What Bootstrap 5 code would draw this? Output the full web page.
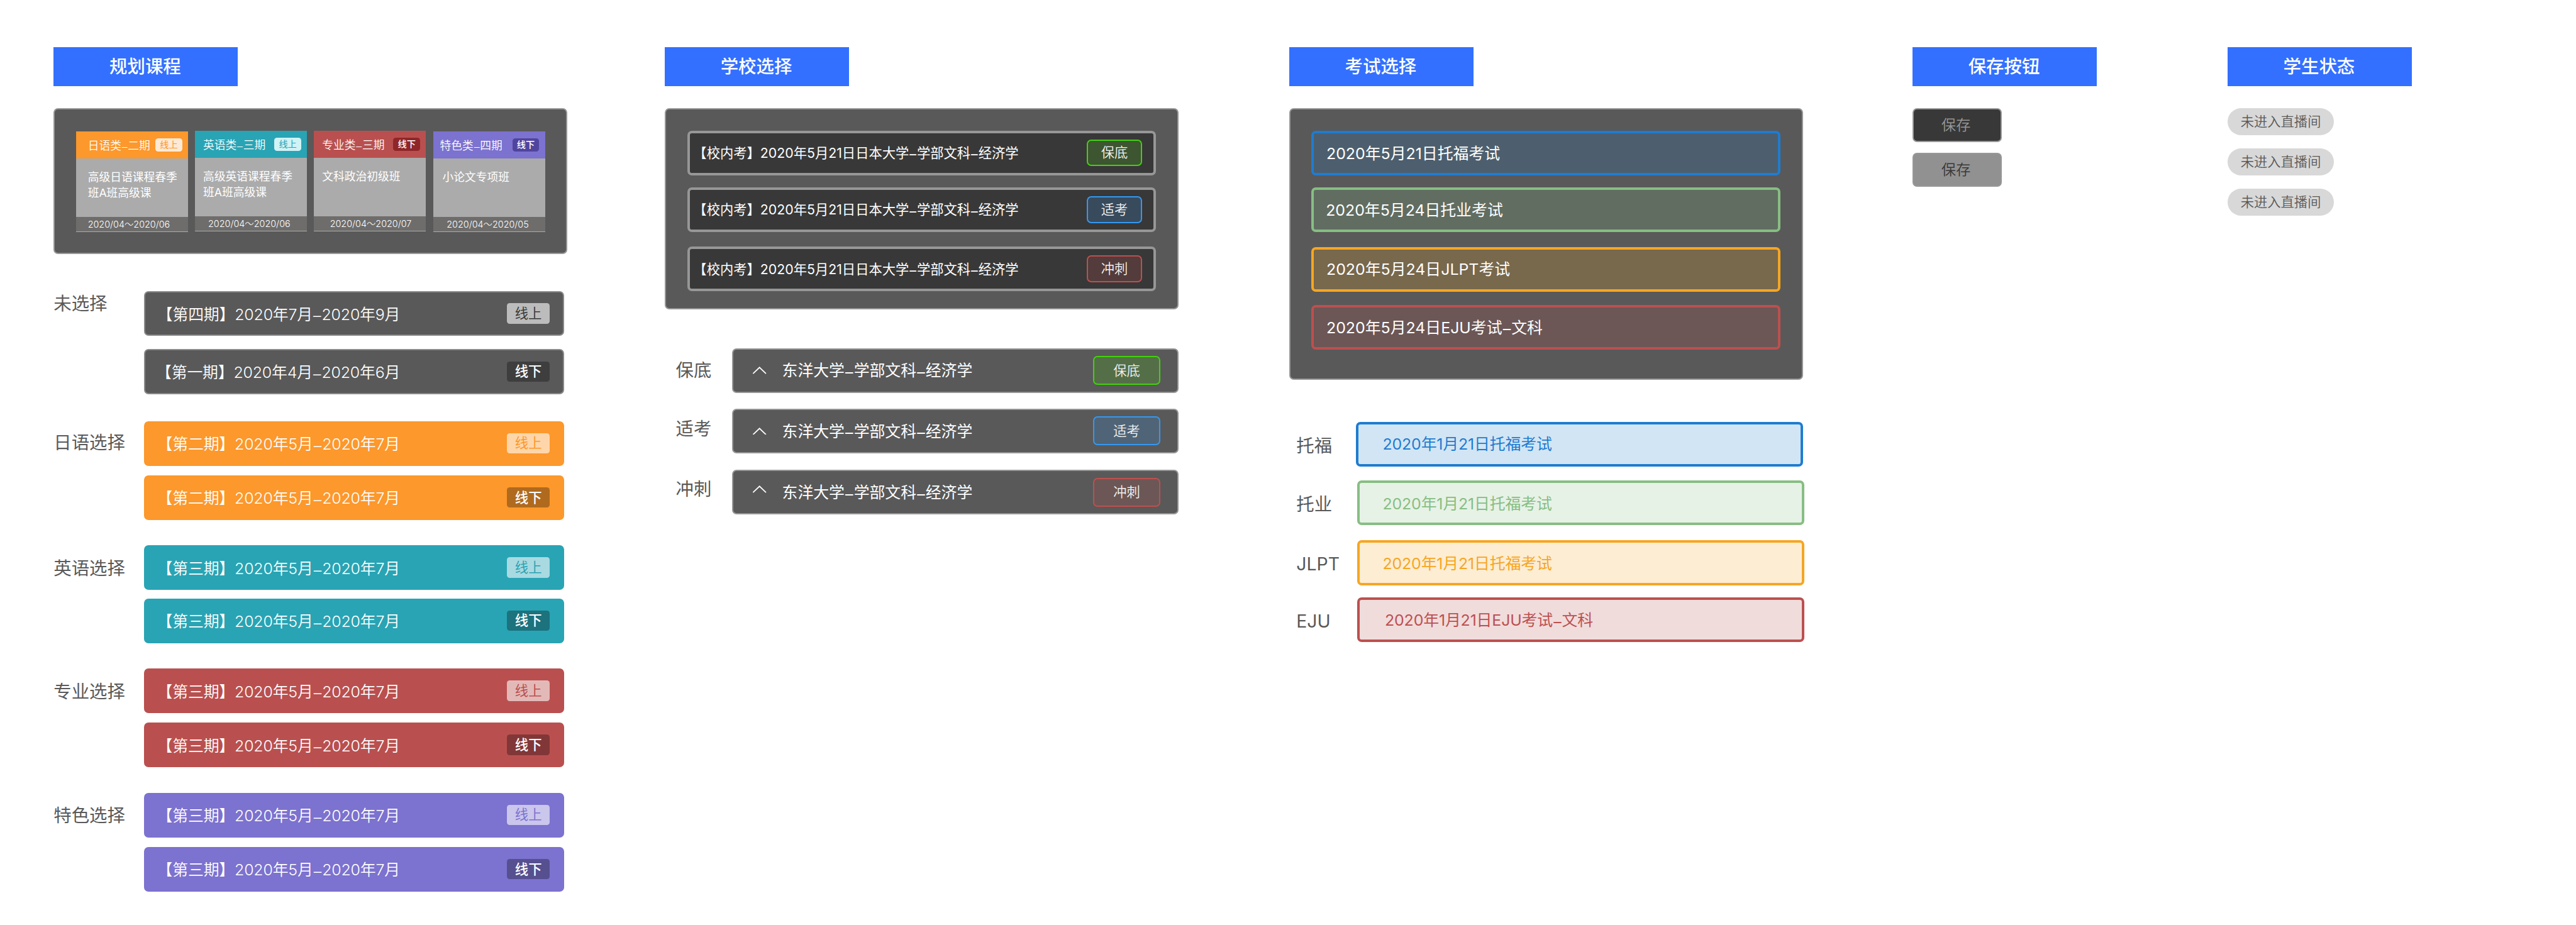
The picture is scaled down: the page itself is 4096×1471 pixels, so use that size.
<!DOCTYPE html>
<html lang="zh-CN">
<head>
<meta charset="utf-8">
<meta name="viewport" content="width=device-width, initial-scale=1">
<title>组件状态</title>
<link rel="stylesheet" href="https://cdn.jsdelivr.net/npm/bootstrap@5.3.0/dist/css/bootstrap.min.css">
<style>
  html { font-size: 8.8812px; }
  body { font-family: Inter, "Noto Sans CJK SC", sans-serif; font-size: 2.8rem; line-height: 1; color: #595959; background: #fff; overflow: hidden; }
  .board { width: 461.2rem; height: 165.6rem; padding: 8.4rem 0 0 9.6rem; }
  .sheet-a, .sheet-b, .sheet-c { width: 92rem; }
  .sheet-b { margin-left: 17.4rem; }
  .sheet-c { margin-left: 19.8rem; }
  .sheet-d { width: 33rem; margin-left: 19.6rem; }
  .sheet-e { width: 33rem; margin-left: 23.4rem; }
  .sheet-title { width: 33rem; height: 7rem; font-size: 3.2rem; font-weight: 500; background: #3370ff; color: #fff; margin-bottom: 4rem; padding: .2rem .2rem 0 0; }
  .panel { background: #595959; border: 2px solid #979797; border-radius: .8rem; }
  .caption { font-size: 3.2rem; line-height: 4.4rem; flex: none; white-space: nowrap; }
  .txt { white-space: nowrap; }
  .dash { margin: 0 .045em; vertical-align: -.11em; line-height: 0; }

  /* course cards */
  .courses { height: 26.1rem; padding: 3.8rem 3.8rem 0 3.8rem; }
  .course { width: 20.05rem; height: 18rem; background: #ababab; color: #fff; font-size: 2rem; }
  .course-head { height: 4.8rem; font-weight: 350; }
  .course-head > .txt { padding-top: .3rem; }
  .course-body { height: 10.5rem; padding-top: 2.1rem; line-height: 2.8rem; }
  .course-date { height: 2.65rem; background: #6e6d6c; font-size: 1.62rem; font-weight: 300; padding-top: .1rem; }
  .mini-tag { width: 4.8rem; height: 2.4rem; border-radius: .5rem; font-size: 1.6rem; font-weight: 400; }
  .low { margin-top: .1rem; }
  .in-21 { padding-left: 2.1rem; } .in-14 { padding-left: 1.45rem; } .in-12 { padding-left: 1.25rem; } .in-17 { padding-left: 1.7rem; }
  .in-23 { padding-left: 2.35rem; } .in-28 { padding-left: 2.85rem; } .in-24 { padding-left: 2.45rem; }
  .end-10 { margin-right: 1.05rem; }

  /* term rows */
  .term-group { margin-top: 4.55rem; }
  .term-group .caption { width: 16.2rem; margin-top: 1.9rem; }
  .term-group.g-none { margin-top: 6.65rem; } .g-none .caption { margin-top: 0; }
  .term-group.g-jp { margin-top: 4.85rem; } .g-jp .caption { margin-top: 1.6rem; }
  .term { width: 75.2rem; height: 8rem; border-radius: .8rem; color: #fff; padding: 0 2.6rem 0 2.3rem; }
  .term + .term { margin-top: 1.7rem; }
  .g-none .term + .term { margin-top: 2.4rem; padding-left: 1.9rem; }
  .g-en .term + .term { margin-top: 1.5rem; }
  .term .txt { padding-top: .35rem; font-weight: 350; letter-spacing: -.018rem; }
  .tag { width: 7.6rem; height: 3.65rem; border-radius: .5rem; font-size: 2.4rem; }
  .tag-on { background: rgba(255,255,255,.6); }
  .tag-off { background: rgba(0,0,0,.3); color: #fff; font-weight: 500; }
  .c-gray { background: #595959; border: 2px solid #8a8a8a; padding: 0 2.4rem 0 2.1rem; } .c-gray .tag-on { color: #3a3a3a; }
  .c-orange { background: #fc982c; } .c-orange .tag-on { color: #fc982c; }
  .c-teal { background: #29a4b4; } .c-teal .tag-on { color: #29a4b4; }
  .c-red { background: #b9504f; } .c-red .tag-on { color: #b9504f; }
  .c-purple { background: #7c72cf; } .c-purple .tag-on { color: #7c72cf; }
  .m-orange { background: #fde9d5; color: #fc982c; } .m-teal { background: #d0f3f6; color: #29a4b4; }
  .m-red { background: #8f2628; color: #fff; font-weight: 500; } .m-purple { background: #50459e; color: #fff; font-weight: 500; }

  /* school rows */
  .schools { height: 36.05rem; padding: 3.75rem 3.8rem 0; }
  .school { height: 8rem; border: 4px solid #979797; border-radius: .8rem; background: #383838; color: #fff; font-size: 2.4rem; padding: 0 2rem 0 .65rem; }
  .school .txt { padding-top: .15rem; }
  .school + .school, .exam + .exam { margin-top: 2.15rem; }
  .school + .school + .school, .exam + .exam + .exam { margin-top: 2.65rem; }
  .level { width: 10rem; height: 4.8rem; border-radius: .8rem; border: 2px solid; font-size: 2.4rem; font-weight: 350; }
  .level span { color: #f2f2f2; }
  .l-green { border-color: #43d10e; background: #3d5530; }
  .l-blue { border-color: #3498f0; background: #384b5d; }
  .l-red { border-color: #bc504f; background: #533c3b; }
  .pick { margin-top: 2.83rem; }
  .pick-first { margin-top: 6.9rem; }
  .pick-last { margin-top: 2.95rem; }
  .pick .caption { width: 10.1rem; margin-left: 2rem; padding-bottom: .2rem; }
  .pick + .pick .caption { padding-bottom: .9rem; }
  .pick + .pick-last .caption { padding-bottom: 1.2rem; }
  .pick-row { width: 79.9rem; height: 8rem; border: 2px solid #979797; border-radius: .8rem; background: #595959; color: #fff; padding: 0 3.05rem 0 3.5rem; }
  .pick-row .txt { padding-top: .15rem; }
  .pick-row .level { width: 12rem; height: 5.2rem; }
  .pick-row .l-green { background: #546f48; } .pick-row .l-blue { background: #506477; } .pick-row .l-red { background: #6c5756; }
  .chev { width: 2.4rem; height: 1.3rem; margin-right: 2.8rem; flex: none; }
  .pick-last .chev { margin-bottom: 1.1rem; }

  /* exam rows */
  .exams { height: 48.6rem; padding: 3.8rem 3.8rem 0; }
  .exam { height: 8rem; border: 4px solid; border-radius: .8rem; padding-left: 2.2rem; }
  .exam .txt { color: #fff; padding-top: .1rem; }
  .exam + .exam + .exam + .exam { margin-top: 2.4rem; }
  .e-blue { border-color: #1f7cd0; background: #4d5f6e; } .e-green { border-color: #87be83; background: #626d61; padding-left: 2.1rem; }
  .e-orange { border-color: #f6a623; background: #78684c; } .e-red { border-color: #bc504f; background: #6c5756; }
  .plan { margin-top: 2.48rem; }
  .plan-first { margin-top: 7.6rem; }
  .plan-third { margin-top: 2.7rem; }
  .plan-last { margin-top: 2.2rem; }
  .plan .caption { width: 10.9rem; margin-left: 1.3rem; padding-top: .4rem; }
  .plan-first .caption { width: 10.7rem; }
  .plan-row { width: 80rem; height: 8rem; flex: none; border: 4px solid; border-radius: .8rem; padding-left: 4.1rem; }
  .plan-row .txt { padding-top: .3rem; letter-spacing: -.015rem; }
  .plan-first .plan-row { padding-left: 4.3rem; }
  .plan-first .txt { padding-top: 0; }
  .plan-last .plan-row { padding-left: 4.5rem; }
  .p-blue { border-color: #1f7cd0; background: #d2e5f4; color: #1f7cd0; }
  .p-green { border-color: #87be83; background: #e7f2e6; color: #87be83; }
  .p-orange { border-color: #f6a623; background: #fdedd3; color: #f6a623; }
  .p-red { border-color: #bc504f; background: #f1dcdc; color: #bc504f; }

  .save { width: 16rem; height: 6rem; border: 2px solid #979797; border-radius: .8rem; font-size: 2.6rem; padding: .2rem .4rem 0 0; }
  .save-dark { background: #383838; color: #979797; font-weight: 350; }
  .save-light { background: #919191; color: #383838; margin-top: 2rem; font-weight: 350; }
  .status { width: 19.1rem; height: 4.8rem; background: #d8d8d8; font-size: 2.4rem; font-weight: 350; color: #595959; margin-bottom: 2.4rem; }
</style>
</head>
<body>
<main class="board d-flex align-items-start">
  <section class="sheet-a">
    <div class="sheet-title d-flex align-items-center justify-content-center">规划课程</div>
    <div class="panel courses d-flex justify-content-between">
      <article class="course low">
        <div class="course-head c-orange d-flex align-items-center justify-content-between in-21"><span class="txt">日语类<span class="dash">–</span>二期</span><span class="mini-tag m-orange end-10 d-flex align-items-center justify-content-center">线上</span></div>
        <div class="course-body in-21">高级日语课程春季<br>班A班高级课</div>
        <div class="course-date d-flex align-items-center in-21"><span class="txt">2020/04～2020/06</span></div>
      </article>
      <article class="course">
        <div class="course-head c-teal d-flex align-items-center justify-content-between in-14"><span class="txt">英语类<span class="dash">–</span>三期</span><span class="mini-tag m-teal end-10 d-flex align-items-center justify-content-center">线上</span></div>
        <div class="course-body in-14">高级英语课程春季<br>班A班高级课</div>
        <div class="course-date d-flex align-items-center in-23"><span class="txt">2020/04～2020/06</span></div>
      </article>
      <article class="course">
        <div class="course-head c-red d-flex align-items-center justify-content-between in-14"><span class="txt">专业类<span class="dash">–</span>三期</span><span class="mini-tag m-red end-10 d-flex align-items-center justify-content-center">线下</span></div>
        <div class="course-body in-14">文科政治初级班</div>
        <div class="course-date d-flex align-items-center in-28"><span class="txt">2020/04～2020/07</span></div>
      </article>
      <article class="course low">
        <div class="course-head c-purple d-flex align-items-center justify-content-between in-12"><span class="txt">特色类<span class="dash">–</span>四期</span><span class="mini-tag m-purple end-10 d-flex align-items-center justify-content-center">线下</span></div>
        <div class="course-body in-17">小论文专项班</div>
        <div class="course-date d-flex align-items-center in-24"><span class="txt">2020/04～2020/05</span></div>
      </article>
    </div>

    <div class="term-group g-none d-flex align-items-start">
      <div class="caption">未选择</div>
      <div>
        <div class="term c-gray d-flex align-items-center justify-content-between"><span class="txt">【第四期】2020年7月<span class="dash">–</span>2020年9月</span><span class="tag tag-on d-flex align-items-center justify-content-center">线上</span></div>
        <div class="term c-gray d-flex align-items-center justify-content-between"><span class="txt">【第一期】2020年4月<span class="dash">–</span>2020年6月</span><span class="tag tag-off d-flex align-items-center justify-content-center">线下</span></div>
      </div>
    </div>
    <div class="term-group g-jp d-flex align-items-start">
      <div class="caption">日语选择</div>
      <div>
        <div class="term c-orange d-flex align-items-center justify-content-between"><span class="txt">【第二期】2020年5月<span class="dash">–</span>2020年7月</span><span class="tag tag-on d-flex align-items-center justify-content-center">线上</span></div>
        <div class="term c-orange d-flex align-items-center justify-content-between"><span class="txt">【第二期】2020年5月<span class="dash">–</span>2020年7月</span><span class="tag tag-off d-flex align-items-center justify-content-center">线下</span></div>
      </div>
    </div>
    <div class="term-group g-en d-flex align-items-start">
      <div class="caption">英语选择</div>
      <div>
        <div class="term c-teal d-flex align-items-center justify-content-between"><span class="txt">【第三期】2020年5月<span class="dash">–</span>2020年7月</span><span class="tag tag-on d-flex align-items-center justify-content-center">线上</span></div>
        <div class="term c-teal d-flex align-items-center justify-content-between"><span class="txt">【第三期】2020年5月<span class="dash">–</span>2020年7月</span><span class="tag tag-off d-flex align-items-center justify-content-center">线下</span></div>
      </div>
    </div>
    <div class="term-group d-flex align-items-start">
      <div class="caption">专业选择</div>
      <div>
        <div class="term c-red d-flex align-items-center justify-content-between"><span class="txt">【第三期】2020年5月<span class="dash">–</span>2020年7月</span><span class="tag tag-on d-flex align-items-center justify-content-center">线上</span></div>
        <div class="term c-red d-flex align-items-center justify-content-between"><span class="txt">【第三期】2020年5月<span class="dash">–</span>2020年7月</span><span class="tag tag-off d-flex align-items-center justify-content-center">线下</span></div>
      </div>
    </div>
    <div class="term-group d-flex align-items-start">
      <div class="caption">特色选择</div>
      <div>
        <div class="term c-purple d-flex align-items-center justify-content-between"><span class="txt">【第三期】2020年5月<span class="dash">–</span>2020年7月</span><span class="tag tag-on d-flex align-items-center justify-content-center">线上</span></div>
        <div class="term c-purple d-flex align-items-center justify-content-between"><span class="txt">【第三期】2020年5月<span class="dash">–</span>2020年7月</span><span class="tag tag-off d-flex align-items-center justify-content-center">线下</span></div>
      </div>
    </div>
  </section>

  <section class="sheet-b">
    <div class="sheet-title d-flex align-items-center justify-content-center">学校选择</div>
    <div class="panel schools">
      <div class="school d-flex align-items-center justify-content-between"><span class="txt">【校内考】2020年5月21日日本大学<span class="dash">–</span>学部文科<span class="dash">–</span>经济学</span><span class="level l-green d-flex align-items-center justify-content-center"><span>保底</span></span></div>
      <div class="school d-flex align-items-center justify-content-between"><span class="txt">【校内考】2020年5月21日日本大学<span class="dash">–</span>学部文科<span class="dash">–</span>经济学</span><span class="level l-blue d-flex align-items-center justify-content-center"><span>适考</span></span></div>
      <div class="school d-flex align-items-center justify-content-between"><span class="txt">【校内考】2020年5月21日日本大学<span class="dash">–</span>学部文科<span class="dash">–</span>经济学</span><span class="level l-red d-flex align-items-center justify-content-center"><span>冲刺</span></span></div>
    </div>
    <div class="pick pick-first d-flex align-items-center">
      <div class="caption">保底</div>
      <div class="pick-row d-flex align-items-center"><svg class="chev" viewBox="0 0 24 13" fill="none" stroke="#fff" stroke-width="2" stroke-linecap="round"><path d="M1 12 12 1.4 23 12"/></svg><span class="txt me-auto">东洋大学<span class="dash">–</span>学部文科<span class="dash">–</span>经济学</span><span class="level l-green d-flex align-items-center justify-content-center"><span>保底</span></span></div>
    </div>
    <div class="pick d-flex align-items-center">
      <div class="caption">适考</div>
      <div class="pick-row d-flex align-items-center"><svg class="chev" viewBox="0 0 24 13" fill="none" stroke="#fff" stroke-width="2" stroke-linecap="round"><path d="M1 12 12 1.4 23 12"/></svg><span class="txt me-auto">东洋大学<span class="dash">–</span>学部文科<span class="dash">–</span>经济学</span><span class="level l-blue d-flex align-items-center justify-content-center"><span>适考</span></span></div>
    </div>
    <div class="pick pick-last d-flex align-items-center">
      <div class="caption">冲刺</div>
      <div class="pick-row d-flex align-items-center"><svg class="chev" viewBox="0 0 24 13" fill="none" stroke="#fff" stroke-width="2" stroke-linecap="round"><path d="M1 12 12 1.4 23 12"/></svg><span class="txt me-auto">东洋大学<span class="dash">–</span>学部文科<span class="dash">–</span>经济学</span><span class="level l-red d-flex align-items-center justify-content-center"><span>冲刺</span></span></div>
    </div>
  </section>

  <section class="sheet-c">
    <div class="sheet-title d-flex align-items-center justify-content-center">考试选择</div>
    <div class="panel exams">
      <div class="exam e-blue d-flex align-items-center"><span class="txt">2020年5月21日托福考试</span></div>
      <div class="exam e-green d-flex align-items-center"><span class="txt">2020年5月24日托业考试</span></div>
      <div class="exam e-orange d-flex align-items-center"><span class="txt">2020年5月24日JLPT考试</span></div>
      <div class="exam e-red d-flex align-items-center"><span class="txt">2020年5月24日EJU考试<span class="dash">–</span>文科</span></div>
    </div>
    <div class="plan plan-first d-flex align-items-center"><div class="caption">托福</div><div class="plan-row p-blue d-flex align-items-center"><span class="txt">2020年1月21日托福考试</span></div></div>
    <div class="plan d-flex align-items-center"><div class="caption">托业</div><div class="plan-row p-green d-flex align-items-center"><span class="txt">2020年1月21日托福考试</span></div></div>
    <div class="plan plan-third d-flex align-items-center"><div class="caption">JLPT</div><div class="plan-row p-orange d-flex align-items-center"><span class="txt">2020年1月21日托福考试</span></div></div>
    <div class="plan plan-last d-flex align-items-center"><div class="caption">EJU</div><div class="plan-row p-red d-flex align-items-center"><span class="txt">2020年1月21日EJU考试<span class="dash">–</span>文科</span></div></div>
  </section>

  <section class="sheet-d">
    <div class="sheet-title d-flex align-items-center justify-content-center">保存按钮</div>
    <div class="save save-dark d-flex align-items-center justify-content-center">保存</div>
    <div class="save save-light d-flex align-items-center justify-content-center">保存</div>
  </section>

  <section class="sheet-e">
    <div class="sheet-title d-flex align-items-center justify-content-center">学生状态</div>
    <div class="status rounded-pill d-flex align-items-center justify-content-center">未进入直播间</div>
    <div class="status rounded-pill d-flex align-items-center justify-content-center">未进入直播间</div>
    <div class="status rounded-pill d-flex align-items-center justify-content-center">未进入直播间</div>
  </section>
</main>
<script src="https://cdn.jsdelivr.net/npm/bootstrap@5.3.0/dist/js/bootstrap.bundle.min.js"></script>
</body>
</html>
